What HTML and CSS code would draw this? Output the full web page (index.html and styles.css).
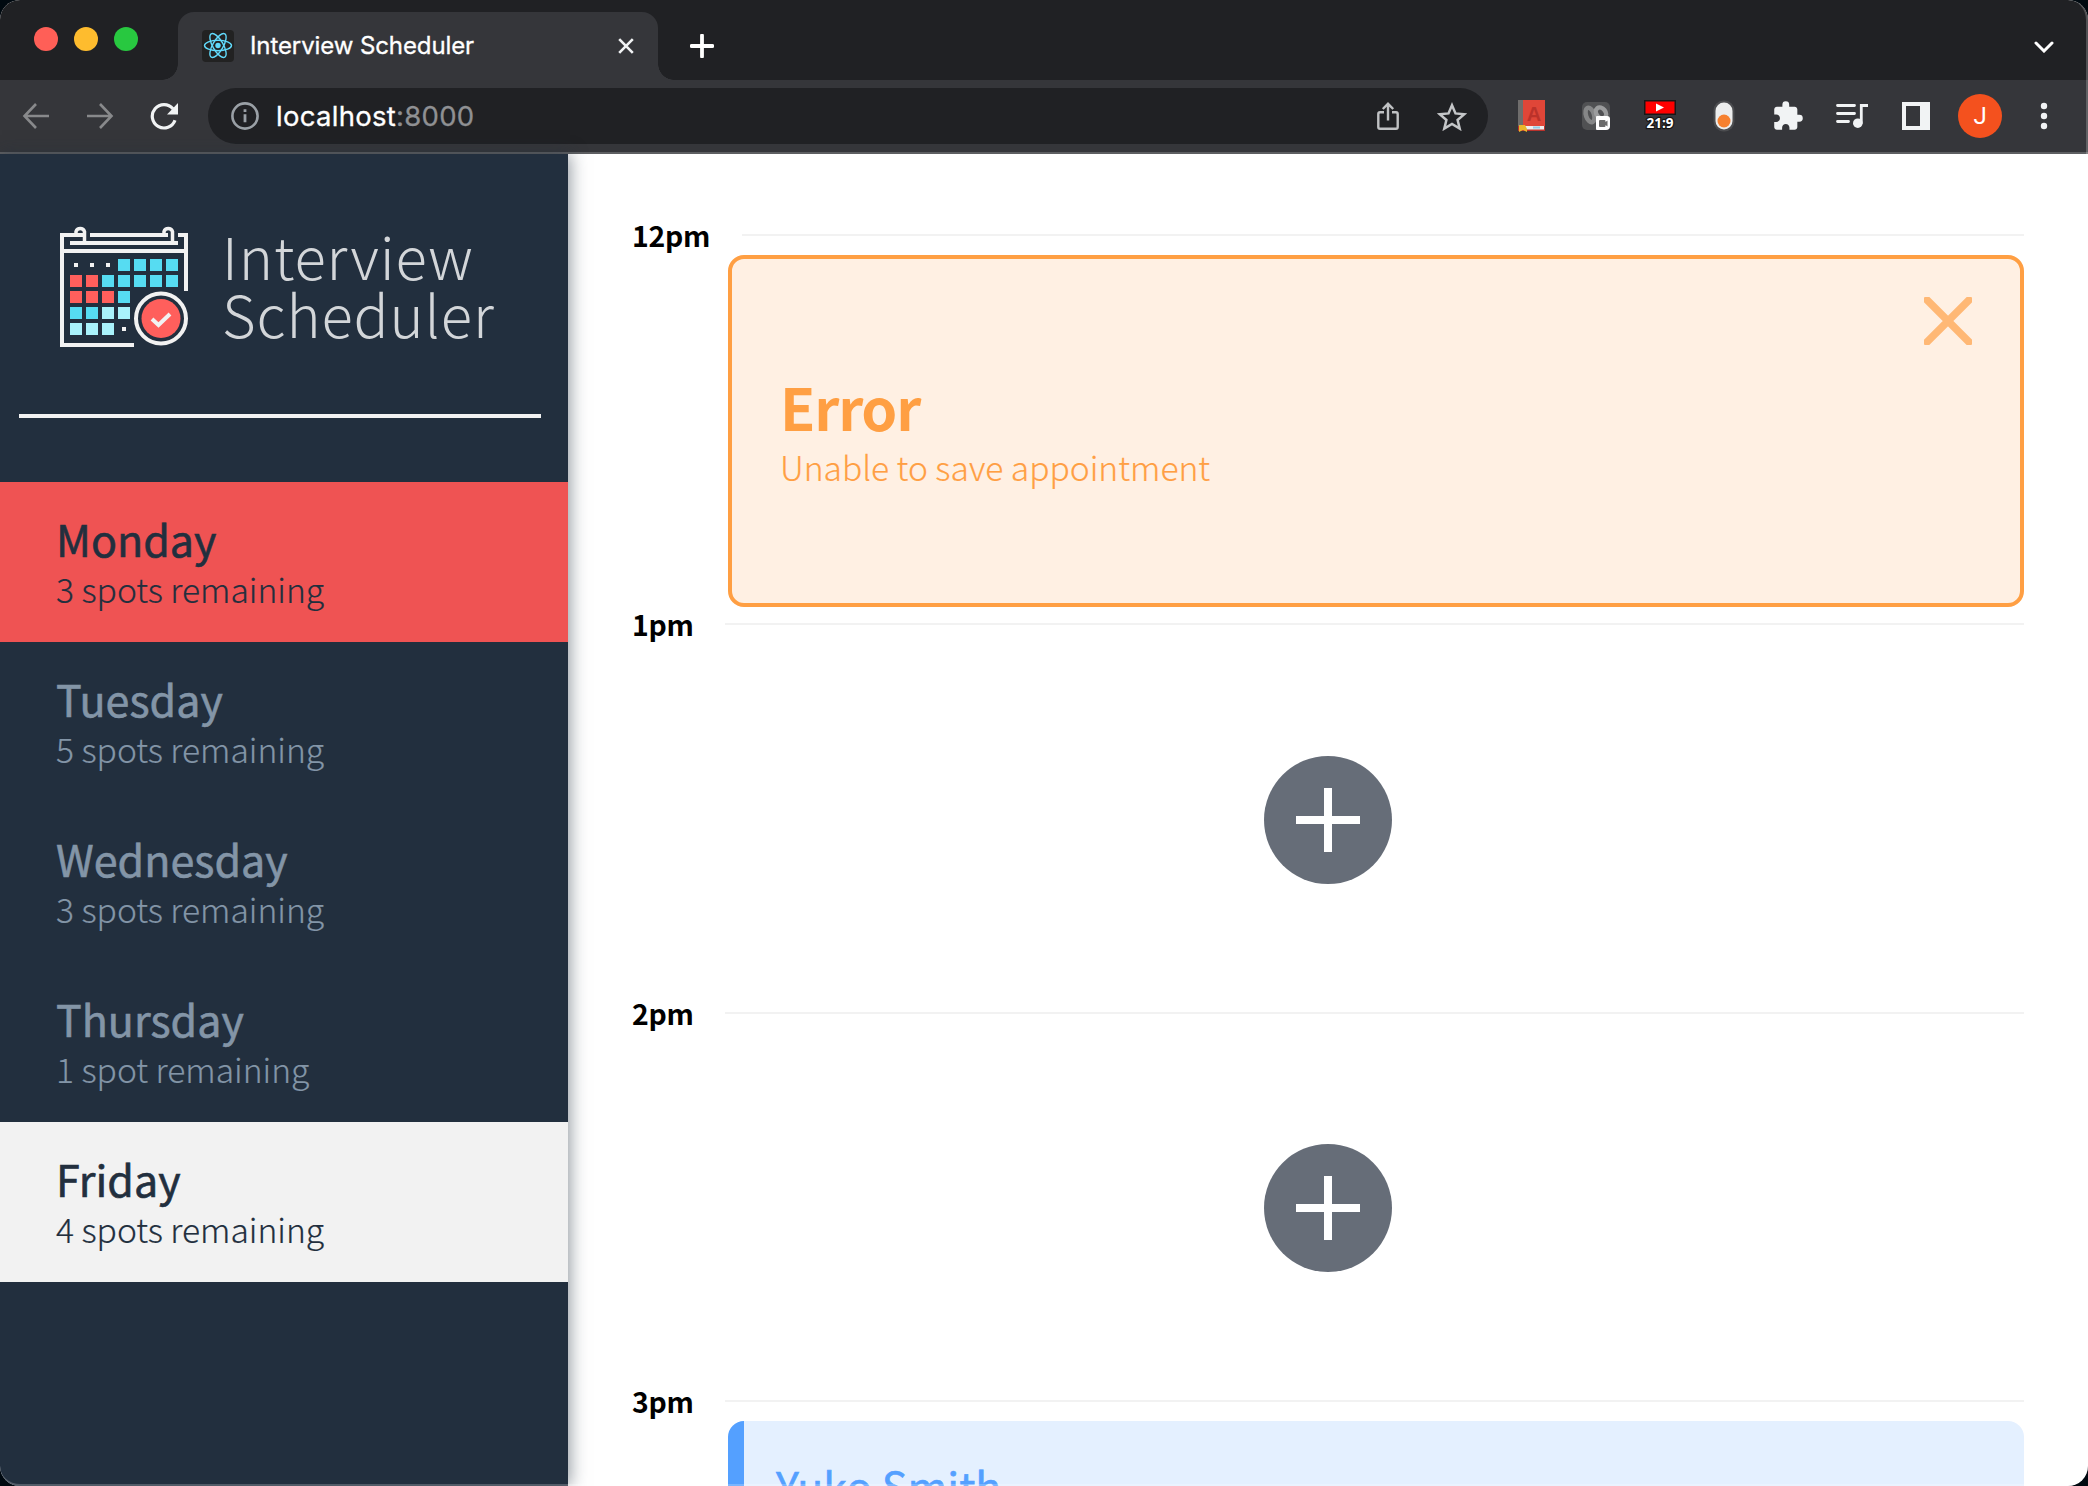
FILE: index.html
```html
<!DOCTYPE html>
<html lang="en">
<head>
<meta charset="utf-8">
<title>Interview Scheduler</title>
<link rel="stylesheet" href="styles.css">
</head>
<body>
<div class="window">
  <header class="tabstrip">
    <div class="lights"><i class="red"></i><i class="yellow"></i><i class="green"></i></div>
    <div class="tab">
      <svg class="favicon" viewBox="0 0 32 32"><rect width="32" height="32" rx="4" fill="#222"/><g fill="none" stroke="#61dafb" stroke-width="1.4"><ellipse cx="16" cy="15.5" rx="13.5" ry="5.2"/><ellipse cx="16" cy="15.5" rx="13.5" ry="5.2" transform="rotate(60 16 15.5)"/><ellipse cx="16" cy="15.5" rx="13.5" ry="5.2" transform="rotate(120 16 15.5)"/></g><circle cx="16" cy="15.5" r="2.7" fill="#61dafb"/></svg>
      <span class="tab-title">Interview Scheduler</span>
      <svg class="tab-close" viewBox="0 0 16 16"><path d="M1.2 1.2 14.8 14.8M14.8 1.2 1.2 14.8" stroke="#f1f3f4" stroke-width="2.6"/></svg>
    </div>
    <svg class="new-tab" viewBox="0 0 24 24"><path d="M12 1.5v21M1.5 12h21" stroke="#fff" stroke-width="3.8" stroke-linecap="round"/></svg>
    <svg class="chevron" viewBox="0 0 20 12"><path d="M2 2l8 8 8-8" fill="none" stroke="#fff" stroke-width="3" stroke-linecap="round"/></svg>
  </header>
  <nav class="toolbar">
    <svg class="back" viewBox="0 0 28 28"><path d="M27 14H3M14 2 2.5 14 14 26" fill="none" stroke="#88898b" stroke-width="2.6"/></svg>
    <svg class="forward" viewBox="0 0 28 28"><path d="M1 14h24M14 2 25.5 14 14 26" fill="none" stroke="#88898b" stroke-width="2.6"/></svg>
    <svg class="reload" viewBox="0 0 28 28"><path d="M25 18.2A11.700 11.700 0 1 1 23 6.800" fill="none" stroke="#f1f3f4" stroke-width="3.200"/><path d="M28 1v11.500H17z" fill="#f1f3f4"/></svg>
    <div class="omnibox">
      <svg class="info" viewBox="0 0 28 28"><circle cx="14" cy="14" r="12.6" fill="none" stroke="#9aa0a6" stroke-width="2.6"/><path d="M14 12.300v8M14 7.200v2.900" stroke="#9aa0a6" stroke-width="2.800"/></svg>
      <span class="url">localhost<span class="port">:8000</span></span>
      <svg class="share" viewBox="0 0 22 28"><path d="M7 10.200H3Q1.300 10.200 1.300 12v13Q1.300 26.700 3 26.700h16q1.700 0 1.700-1.700V12q0-1.800-1.700-1.800h-4M11 18.500V2M5.800 7 11 1.800 16.200 7" fill="none" stroke="#c0c2c4" stroke-width="2.400"/></svg>
      <svg class="star" viewBox="0 0 30 29"><path d="M15 3.200 18.500 11.400 27.300 12.200 20.600 18 22.700 26.600 15 22 7.300 26.600 9.400 18 2.700 12.200 11.500 11.400z" fill="none" stroke="#c4c6c8" stroke-width="2.500"/></svg>
    </div>
    <div class="extensions">
      <svg viewBox="0 0 32 32" class="ext"><path d="M2 26h27v5H2z" fill="#b9312b"/><path d="M2 0h6v26H2z" fill="#6f6d6c"/><path d="M7 0h22v26H7z" fill="#e04638"/><text x="18" y="20.500" class="book-letter">A</text><path d="M9 26h19v3.500H9z" fill="#eee"/><path d="M17 26.500h7v2h-7z" fill="#93cbe6"/><path d="M3 25h6l2 4v3l-4-2-4 2z" fill="#e9b52b"/></svg>
      <svg viewBox="0 0 32 32" class="ext"><rect x="2" y="2" width="28" height="28" rx="5" fill="#505153"/><g fill="none" stroke-width="4.500"><ellipse cx="10" cy="15" rx="4" ry="7.500" stroke="#858687" transform="rotate(-18 10 15)"/><ellipse cx="21" cy="13" rx="4.500" ry="6" stroke="#9b9c9d" transform="rotate(-38 21 13)"/></g><path d="M16 17q0-1 1-1h10q3 0 3 3v7q0 4-4 4h-9q-1 0-1-1z" fill="#fff"/><path d="M19 21q0-1 1-1h4.500q1 0 1 1v1l2-1.500v6l-2-1.500v1q0 1-1 1H20q-1 0-1-1z" fill="#6b6b6b"/></svg>
      <svg viewBox="0 0 32 32" class="ext"><rect width="32" height="15" fill="#181818"/><rect x="1.500" y="1.500" width="29" height="12" fill="#f00"/><path d="M12 3.500v8l8-4z" fill="#fff"/><text x="16" y="27.500" class="ratio">21:9</text></svg>
      <svg viewBox="0 0 32 32" class="ext"><rect x="5.500" y=".5" width="21" height="31" rx="10" fill="#4b4c4f"/><rect x="7.500" y="2.500" width="17" height="27" rx="8.500" fill="#eceded"/><circle cx="16" cy="21" r="6.500" fill="#f6802f"/></svg>
      <svg viewBox="0 0 32 32" class="ext"><path transform="translate(-.5 -.1) scale(1.36)" d="M20.500 11H19V7c0-1.100-.9-2-2-2h-4V3.500a2.500 2.500 0 0 0-5 0V5H4c-1.100 0-1.990.9-1.990 2v3.800H3.500c1.490 0 2.700 1.210 2.700 2.700s-1.210 2.700-2.700 2.700H2V20c0 1.100.9 2 2 2h3.800v-1.500c0-1.490 1.210-2.700 2.700-2.700s2.700 1.210 2.700 2.700V22H17c1.100 0 2-.9 2-2v-4h1.500a2.500 2.500 0 0 0 0-5z" fill="#f1f3f4"/></svg>
      <svg viewBox="0 0 32 32" class="ext"><path d="M1.500 5.500h17M1.500 13.500h17M1.500 21.500h11" stroke="#f1f3f4" stroke-width="2.800" stroke-linecap="round"/><path d="M25.300 23.500V5.500H32" fill="none" stroke="#f1f3f4" stroke-width="2.800"/><circle cx="21.800" cy="23.200" r="4.800" fill="#f1f3f4"/></svg>
      <svg viewBox="0 0 32 32" class="ext"><path d="M2 2h28v28H2zM6 6v20h14V6z" fill="#f1f3f4" fill-rule="evenodd"/></svg>
    </div>
    <div class="avatar">J</div>
    <svg class="menu" viewBox="0 0 8 28"><g fill="#f1f3f4"><circle cx="4" cy="4" r="3.200"/><circle cx="4" cy="14" r="3.200"/><circle cx="4" cy="24" r="3.200"/></g></svg>
  </nav>
  <main class="layout">
    <section class="sidebar">
      <div class="logo">
        <svg class="calendar" viewBox="0 0 128 122">
          <g fill="none" stroke="#f2f2f2" stroke-width="4">
            <path d="M26 10H2v110h72M30 10h78M118 10h8v56M4 26h122M10 18h108"/>
            <path d="M16 10V6.500a4.500 4.500 0 0 1 8.500 0V18M104 10V6.500a4.500 4.500 0 0 1 8.500 0V18" stroke-width="3.500"/>
          </g>
          <g fill="#56dcf2"><path d="M58 34h12v12H58zM74 34h12v12H74zM90 34h12v12H90zM106 34h12v12h-12zM42 50h12v12H42zM58 50h12v12H58zM74 50h12v12H74zM90 50h12v12H90zM106 50h12v12h-12zM58 66h12v12H58zM10 82h12v12H10zM26 82h12v12H26z"/></g>
          <path fill="#a9f2fb" d="M42 82h12v12H42zM58 82h12v12H58zM10 98h12v12H10zM26 98h12v12H26zM42 98h12v12H42z"/>
          <path fill="#ff5f5c" d="M10 50h12v12H10zM26 50h12v12H26zM10 66h12v12H10zM26 66h12v12H26zM42 66h12v12H42z"/>
          <path fill="#f2f2f2" d="M14 38h4v4h-4zM30 38h4v4h-4zM46 38h4v4h-4zM62 102h4v4h-4z"/>
          <circle cx="101" cy="93.500" r="25" fill="#222f3e" stroke="#f2f2f2" stroke-width="4"/><circle cx="101" cy="93.500" r="19.500" fill="#ff5f5c"/>
          <path d="M92 94l6.500 6L110 89" fill="none" stroke="#f2f2f2" stroke-width="4"/>
        </svg>
        <div class="brand"><span class="brand-top">Interview</span><span class="brand-bottom">Scheduler</span></div>
      </div>
      <hr class="rule">
      <ul class="days">
        <li class="day selected"><h2>Monday</h2><h3>3 spots remaining</h3></li>
        <li class="day"><h2>Tuesday</h2><h3>5 spots remaining</h3></li>
        <li class="day"><h2>Wednesday</h2><h3>3 spots remaining</h3></li>
        <li class="day"><h2>Thursday</h2><h3>1 spot remaining</h3></li>
        <li class="day hover"><h2>Friday</h2><h3>4 spots remaining</h3></li>
      </ul>
    </section>
    <section class="schedule">
      <article class="slot noon">
        <div class="time"><h4>12pm</h4><hr></div>
        <div class="card error">
          <div><h1>Error</h1><p>Unable to save appointment</p></div>
          <svg class="close" viewBox="0 0 48 48"><path d="M3 3 45 45M45 3 3 45" stroke="#ffb875" stroke-width="7.500" stroke-linecap="square"/></svg>
        </div>
      </article>
      <article class="slot">
        <div class="time"><h4>1pm</h4><hr></div>
        <div class="empty"><svg class="add" viewBox="0 0 128 128"><circle cx="64" cy="64" r="64" fill="#666d78"/><path d="M64 32v64M32 64h64" stroke="#fff" stroke-width="8"/></svg></div>
      </article>
      <article class="slot">
        <div class="time"><h4>2pm</h4><hr></div>
        <div class="empty"><svg class="add" viewBox="0 0 128 128"><circle cx="64" cy="64" r="64" fill="#666d78"/><path d="M64 32v64M32 64h64" stroke="#fff" stroke-width="8"/></svg></div>
      </article>
      <article class="slot">
        <div class="time"><h4>3pm</h4><hr></div>
        <div class="card booked"><h2>Yuko Smith</h2></div>
      </article>
    </section>
  </main>
</div>
</body>
</html>
```
FILE: styles.css
```css
* { box-sizing: border-box; }
body { margin: 0; background: #000910; overflow: hidden; }
h1, h2, h3, h4, p, ul { margin: 0; padding: 0; font-weight: inherit; }
svg { display: block; flex: none; }
.window {
  position: relative; width: 2088px; height: 1486px; overflow: hidden;
  border-radius: 20px; background: #fff;
  display: flex; flex-direction: column;
  font-family: "Noto Sans CJK JP", "Noto Sans", sans-serif;
}
.window::after {
  content: ""; position: absolute; inset: 0; border-radius: 20px;
  border: solid rgba(255, 255, 255, .22); border-width: 0 2px 2px 0; pointer-events: none;
}

/* browser chrome */
.tabstrip { height: 80px; flex: none; display: flex; background: #202124; padding-left: 34px; }
.lights { display: flex; gap: 16px; padding-top: 27px; width: 144px; }
.lights i { width: 24px; height: 24px; border-radius: 50%; }
.red { background: #ff5f57; }
.yellow { background: #febc2e; }
.green { background: #28c840; }
.tab {
  position: relative; width: 480px; height: 68px; margin-top: 12px; padding: 0 24px;
  display: flex; align-items: center; background: #35363a; border-radius: 16px 16px 0 0;
}
.tab::before, .tab::after { content: ""; position: absolute; bottom: 0; width: 16px; height: 16px; }
.tab::before { left: -16px; background: radial-gradient(circle at 0 0, transparent 15.5px, #35363a 16px); }
.tab::after { right: -16px; background: radial-gradient(circle at 100% 0, transparent 15.5px, #35363a 16px); }
.favicon { width: 32px; height: 32px; }
.tab-title { flex: 1; margin-left: 16px; font: 24px/32px Inter, sans-serif; letter-spacing: -.1px; color: #fff; white-space: nowrap; -webkit-text-stroke: .3px; }
.tab-close { width: 16px; height: 16px; }
.new-tab { width: 24px; height: 24px; margin: 34px 0 0 32px; }
.chevron { width: 20px; height: 12px; margin: 41px 34px 0 auto; }
.toolbar {
  height: 74px; flex: none; display: flex; align-items: center; padding: 0 40px 0 22px;
  background: #35363a; border-bottom: 2px solid #5e5f62;
}
.back, .forward, .reload { width: 28px; height: 28px; }
.forward { margin-left: 36px; }
.reload { margin-left: 36px; }
.omnibox {
  width: 1280px; height: 56px; margin-left: 30px; padding: 0 21px 0 23px; border-radius: 28px;
  display: flex; align-items: center; background: #202124;
}
.info { width: 28px; height: 28px; }
.url { flex: 1; margin-left: 17px; padding-bottom: 1px; font: 27.5px/40px Inter, sans-serif; letter-spacing: .28px; color: #fff; -webkit-text-stroke: .3px; }
.port { color: #8f9093; }
.share { width: 22px; height: 28px; }
.star { width: 30px; height: 29px; margin-left: 38px; }
.extensions { display: flex; gap: 32px; margin-left: 28px; }
.ext { width: 32px; height: 32px; }
.book-letter { font: 700 20px "Liberation Sans", sans-serif; fill: #bb322a; text-anchor: middle; }
.ratio { font: 700 13.5px "Open Sans", sans-serif; fill: #fff; text-anchor: middle; paint-order: stroke; stroke: #151515; stroke-width: 2.5px; }
.avatar {
  width: 44px; height: 44px; margin-left: 26px; border-radius: 50%; background: #f4511e;
  color: #fff; font: 24px/44px Roboto, sans-serif; text-align: center;
}
.menu { width: 8px; height: 28px; margin-left: auto; }

/* application */
.layout { flex: 1; min-height: 0; display: flex; }
.sidebar {
  position: relative; width: 568px; flex: none; background: #222f3e;
  box-shadow: 2px 0 16px rgba(34, 47, 62, .5);
}
.logo { height: 260px; padding: 71px 0 0 60px; display: flex; }
.calendar { width: 128px; height: 122px; }
.brand {
  display: flex; flex-direction: column; margin: 1px 0 0 34px; white-space: nowrap;
  font-weight: 300; font-size: 58px; line-height: 58px; letter-spacing: .9px; color: #d3d6d9;
}
.rule { width: 522px; height: 4px; margin: 0 0 64px 19px; border: 0; background: #f2f2f2; }
.days { list-style: none; }
.day { height: 160px; padding: 28px 0 0 56px; color: #8395a7; white-space: nowrap; }
.day h2 { font-size: 43px; line-height: 56px; font-weight: 400; -webkit-text-stroke: .6px; }
.day h3 { margin-top: 1px; font-size: 33.6px; line-height: 44px; font-weight: 300; -webkit-text-stroke: .2px; }
.selected { background: #ef5353; color: #222f3e; }
.hover { background: #f2f2f2; color: #222f3e; }
.schedule { flex: 1; padding: 64px 64px 0; overflow: hidden; }
.slot { height: 388.8px; }
.time { height: 37px; display: flex; }
.time h4 { width: 93px; flex: none; margin-top: -2px; font-size: 28.4px; line-height: 38px; font-weight: 700; letter-spacing: -.3px; }
.noon h4 { width: 110px; }
.time hr { flex: 1; height: 2px; margin: 16px 0 0; border: 0; background: #f2f2f2; }
.card { margin-left: 96px; border-radius: 16px; }
.error {
  height: 352px; border: 4px solid #ff9f43; background: #fff0e3; color: #ff9f43;
  display: flex; justify-content: space-between; padding: 38px 48px 0 48px;
}
.error h1 { margin-top: 73px; font-size: 57.6px; line-height: 72px; font-weight: 700; letter-spacing: -1.2px; }
.error p { margin-top: 2px; font-size: 33.6px; line-height: 46px; font-weight: 300; -webkit-text-stroke: .2px; }
.close { width: 48px; height: 48px; }
.empty { height: 351.6px; padding-left: 96px; display: flex; align-items: center; justify-content: center; }
.add { width: 128px; height: 128px; margin-right: 96px; }
.booked { height: 352px; border-left: 16px solid #54a0ff; background: #e4f0ff; color: #54a0ff; padding: 36px 32px; }
.booked h2 { font-size: 43px; line-height: 56px; font-weight: 400; -webkit-text-stroke: .6px; }
```
